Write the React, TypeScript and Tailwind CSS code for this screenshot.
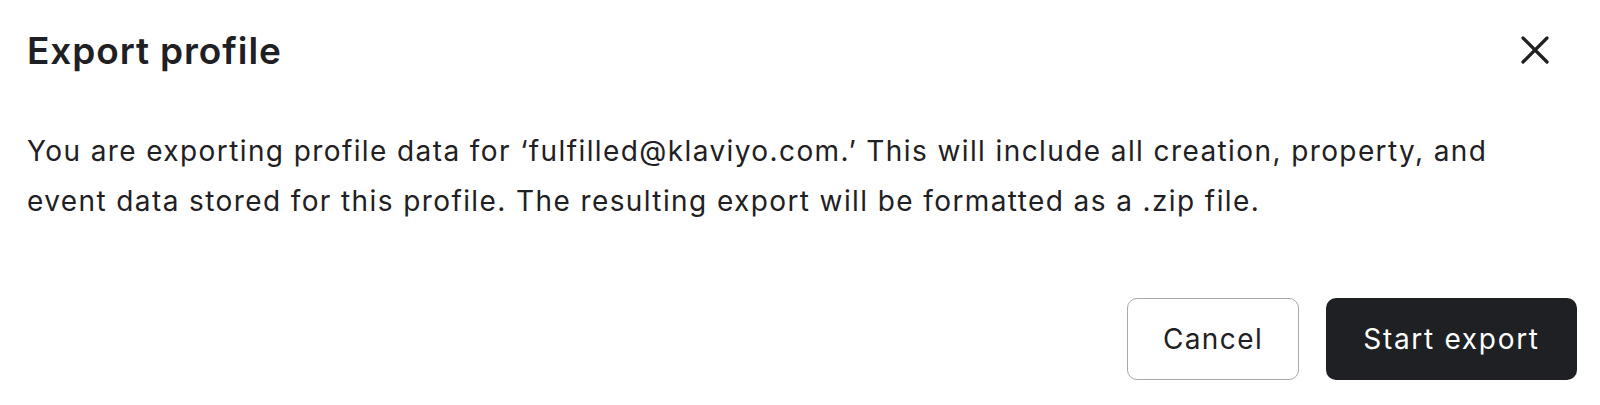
export default function App() {
  return (
    <div
      className="w-full h-[405px] bg-white pl-[27px] pr-[23px] text-[#1f2023]"
      style={{ fontFamily: 'Inter, "Noto Sans", sans-serif' }}
    >
      <div className="flex items-start justify-between pt-[29px]">
        <h2 className="text-[37px] leading-[44px] font-semibold tracking-[0.9px]">Export profile</h2>
        <button
          type="button"
          aria-label="Close"
          className="mt-px mr-[22px] w-10 h-10 flex items-center justify-center"
        >
          <svg width="28" height="28" viewBox="0 0 28 28" fill="none">
            <path d="M2 2L26 26M26 2L2 26" stroke="#1f2023" strokeWidth="3.2" strokeLinecap="round" />
          </svg>
        </button>
      </div>

      <p className="mt-[53px] max-w-[1515px] text-[28px] leading-[50px] tracking-[1.4px]">
        You are exporting profile data for ‘fulfilled@klaviyo.com.’ This will include all creation, property, and
        event data stored for this profile. The resulting export will be formatted as a .zip file.
      </p>

      <div className="mt-[72px] flex justify-end gap-[27px]">
        <button
          type="button"
          className="w-[172px] h-[82px] rounded-[10px] border-[1.5px] border-[#a8a8a8] bg-white text-[28px] tracking-[1.4px] text-[#1f2023]"
        >
          Cancel
        </button>
        <button
          type="button"
          className="w-[251px] h-[82px] rounded-[10px] bg-[#1f2023] text-[28px] tracking-[1.7px] text-white"
        >
          Start export
        </button>
      </div>
    </div>
  );
}
